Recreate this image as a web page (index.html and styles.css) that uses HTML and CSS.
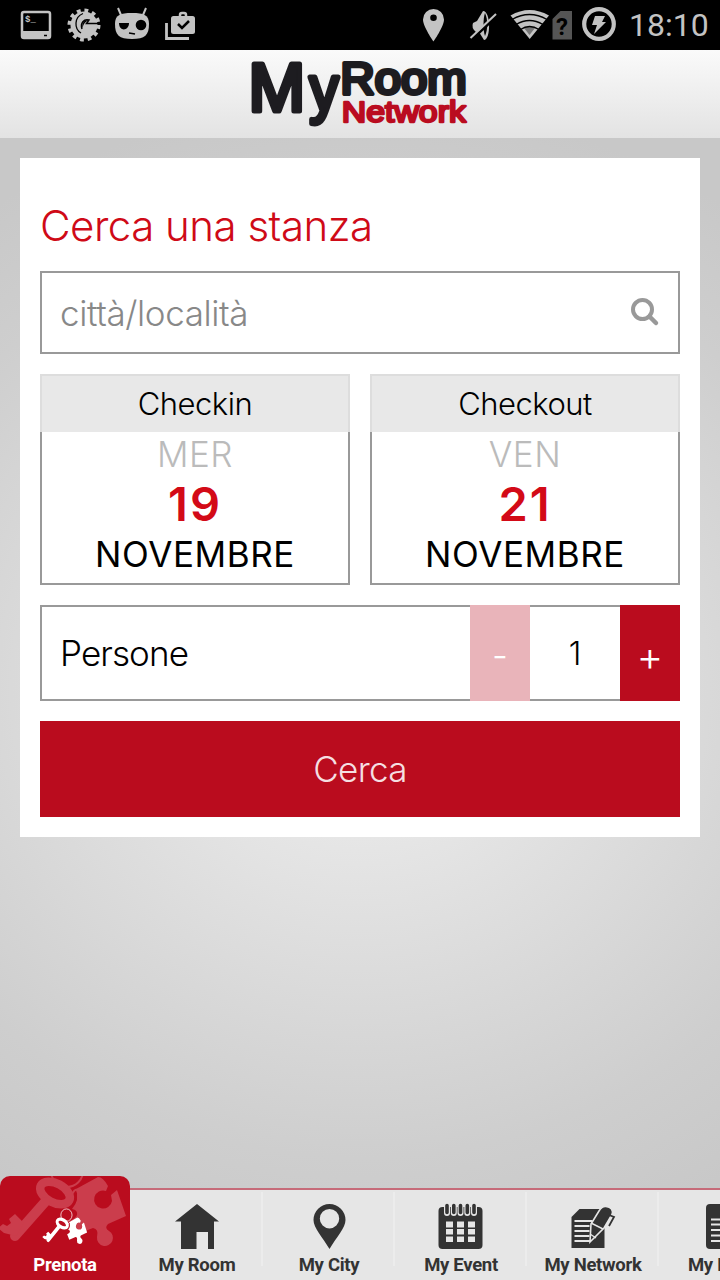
FILE: index.html
```html
<!DOCTYPE html>
<html lang="it">

<head>
    <meta charset="utf-8">
    <title>MyRoom Network</title>
    <link rel="stylesheet" href="styles.css">
</head>

<body>
    <div class="status-bar">
        <svg class="status-icon" viewBox="12 0 48 50">
            <rect x="22" y="12" width="28" height="26" rx="2" fill="none" stroke="#c3c3c3" stroke-width="2.500"/>
            <path d="M22 31h28v7H22z" fill="#c3c3c3"/>
            <path d="M44 35.500h3" stroke="#000" stroke-width="1.500"/>
            <text class="prompt" x="25" y="22">$_</text>
        </svg>
        <svg class="status-icon" viewBox="60 0 48 50">
            <circle cx="84" cy="25" r="13.500" fill="#c3c3c3"/>
            <circle cx="84" cy="25" r="14.500" fill="none" stroke="#c3c3c3" stroke-width="4" stroke-dasharray="3.800 3.792"/>
            <path d="M81 33c-7-4-7-16 2-19.500" fill="none" stroke="#000" stroke-width="1.300"/>
            <path d="M82 29c-2-6 2-10.500 7-9l-2.500 3.500H100" fill="none" stroke="#000" stroke-width="1.500"/>
            <path d="M82.500 28c-1-5 2-8.500 6-7.500-3 1-5 3-6 7.500z" fill="#000"/>
        </svg>
        <svg class="status-icon" viewBox="108 0 48 50">
            <path d="M118 8l3 7M146 8l-3 7" stroke="#c3c3c3" stroke-width="2"/>
            <path d="M115 24c0-9 5-11 17-11s17 2 17 11c0 11-4 15-17 15s-17-4-17-15z" fill="#c3c3c3"/>
            <path d="M119 23h10c0 8-10 9-10 0z" fill="#000"/>
            <circle cx="141" cy="25" r="5.300" fill="#000"/>
            <path d="M129 33l6 1" stroke="#000" stroke-width="1.300"/>
        </svg>
        <svg class="status-icon" viewBox="156 0 48 50">
            <path d="M166.500 23v15.500H189" fill="none" stroke="#c3c3c3" stroke-width="2.800"/>
            <rect x="171" y="16" width="24" height="18" rx="2.500" fill="#c3c3c3"/>
            <path d="M180 17v-2q0-2 2-2h2q2 0 2 2v2" fill="none" stroke="#c3c3c3" stroke-width="2.500"/>
            <path d="M178 24l4 4 7-7" fill="none" stroke="#000" stroke-width="2.500"/>
        </svg>
        <div class="status-right">
            <svg class="status-icon" viewBox="410 0 48 50">
                <path fill-rule="evenodd" d="M433.500 9a10.500 10.500 0 0 0-10.500 10.500c0 7 10.500 22 10.500 22s10.500-15 10.500-22A10.500 10.500 0 0 0 433.500 9zm0 5.500a3.300 3.300 0 1 1 0 6.600 3.300 3.300 0 0 1 0-6.600z" fill="#c3c3c3"/>
            </svg>
            <svg class="status-icon" viewBox="458 0 48 50">
                <path d="M473 23l4-2 6-10c8 0 8 29 1 29l-5-8h-3q-5-4-3-9z" fill="#c3c3c3"/>
                <path d="M485 13c3 7 3 16 0 23-2-5-2-18 0-23z" fill="#000"/>
                <path d="M472 39l26-24" stroke="#000" stroke-width="3"/>
                <path d="M470.500 38l25.500-24" stroke="#c3c3c3" stroke-width="2"/>
            </svg>
            <svg class="wifi" viewBox="506 0 46 50">
                <path d="M510.500 15.500q19-11 38.500 0L529.700 39z" fill="#c3c3c3"/>
                <path d="M524 28q5.500-3 11 0l-5.500 7z" fill="#777"/>
                <path d="M512 19.500q17.500-10 35 0M516 24.500q13.500-8 27 0M520.500 29.500q9-6 18.500 0" fill="none" stroke="#000" stroke-width="1.300"/>
            </svg>
            <svg class="sim" viewBox="552 0 21 50">
                <path d="M552.500 19l8-8h11.500v28.500h-19.500z" fill="#555"/>
                <text class="sim-mark" x="562" y="35">?</text>
            </svg>
            <svg class="battery" viewBox="573 0 52 50">
                <circle cx="599" cy="24" r="14.800" fill="none" stroke="#c3c3c3" stroke-width="4.200"/>
                <path d="M595 16h10l-3 6h4l-12 12 3-9h-5z" fill="#c3c3c3"/>
            </svg>
            <span class="clock">18:10</span>
        </div>
    </div>

    <header class="header">
        <svg class="logo" viewBox="0 0 260 88">
            <text class="logo-my" x="18.400" y="60.500">M</text>
            <text class="logo-my logo-y" x="79.500" y="61.300" textLength="29" lengthAdjust="spacingAndGlyphs">y</text>
            <text class="logo-room" x="110.600" y="44" textLength="126" lengthAdjust="spacingAndGlyphs">Room</text>
            <text class="logo-network" x="111.800" y="71.700" textLength="124" lengthAdjust="spacingAndGlyphs">Network</text>
        </svg>
    </header>

    <main class="content">
        <form class="card">
            <h1 class="title">Cerca una stanza</h1>
            <div class="search">
                <input class="search-input" type="text" placeholder="città/località">
                <svg class="search-icon" viewBox="0 0 30 30">
                    <circle cx="12.500" cy="11.500" r="9.500" fill="none" stroke="#999" stroke-width="4"/>
                    <path d="M19.500 18.500l6.500 6.500" stroke="#999" stroke-width="4.500" stroke-linecap="round"/>
                </svg>
            </div>
            <div class="dates">
                <div class="date">
                    <div class="date-head">Checkin</div>
                    <div class="date-body">
                        <div class="weekday">MER</div>
                        <div class="day">19</div>
                        <div class="month">NOVEMBRE</div>
                    </div>
                </div>
                <div class="date">
                    <div class="date-head">Checkout</div>
                    <div class="date-body">
                        <div class="weekday">VEN</div>
                        <div class="day">21</div>
                        <div class="month">NOVEMBRE</div>
                    </div>
                </div>
            </div>
            <div class="people">
                <span class="people-label">Persone</span>
                <button class="step minus" type="button">-</button>
                <span class="people-count">1</span>
                <button class="step plus" type="button">+</button>
            </div>
            <button class="submit" type="submit">Cerca</button>
        </form>
    </main>

    <nav class="tabs">
        <a class="tab active">
            <svg class="tab-art" viewBox="0 0 130 104">
                <defs>
                    <g id="keys">
                        <circle cx="67" cy="-5" r="16" fill="none" stroke="currentColor" stroke-width="2"/>
                        <ellipse cx="55" cy="17" rx="16" ry="9.500" transform="rotate(28 55 17)" fill="none" stroke="currentColor" stroke-width="8.500"/>
                        <path d="M45 26L15 60" stroke="currentColor" stroke-width="10" stroke-linecap="round"/>
                        <path d="M24 47l-9-9-6 5 2 4-4 3-4-2-5 4 6 5 12 3z" fill="currentColor"/>
                        <path d="M72 18q5-8 6-1v5" fill="none" stroke="currentColor" stroke-width="2"/>
                        <path d="M76 13L98 1q5 0 10 9l-2 5a9 9 0 1 0 6 10l-1-6 6-5 9 26-18 8q-4 4 1 7a8 8 0 1 1-12 6q2-8-4-9L75 59l-6-14q6-2 8-6 1-5-5-6 8-9 4-20z" fill="currentColor"/>
                    </g>
                </defs>
                <use class="keys-back" href="#keys"/>
                <use class="keys-front" href="#keys" transform="translate(43 41) scale(.35 .385)"/>
            </svg>
            <span class="tab-label">Prenota</span>
        </a>
        <a class="tab">
            <svg class="tab-icon" viewBox="0 0 48 48">
                <path d="M24 1L46 18.500h-5V46H35V29H23.500v17H8V18.500H2z" fill="#333"/>
            </svg>
            <span class="tab-label">My Room</span>
        </a>
        <a class="tab">
            <svg class="tab-icon" viewBox="0 0 48 48">
                <path fill-rule="evenodd" d="M24.500 1A16 16 0 0 0 8.500 17c0 8 9 17 16 29 7-12 16-21 16-29a16 16 0 0 0-16-16zm0 5a9.700 9.700 0 1 1 0 19.400 9.700 9.700 0 0 1 0-19.400z" fill="#333"/>
            </svg>
            <span class="tab-label">My City</span>
        </a>
        <a class="tab">
            <svg class="tab-icon" viewBox="0 0 48 48">
                <rect x="1.500" y="4" width="44" height="42" rx="4" fill="#333"/>
                <path d="M10 3v7M23.500 3v7M37 3v7M16.800 3v7M30.300 3v7" stroke="#e6e6e6" stroke-width="6" stroke-linecap="round"/>
                <path d="M10 2.500v7M23.500 2.500v7M37 2.500v7M16.800 2.500v7M30.300 2.500v7" stroke="#333" stroke-width="3.600" stroke-linecap="round"/>
                <path d="M9 18.500h7v6H9zm11 0h7v6h-7zm11 0h7v6h-7zM9 26h7v5.500H9zm11 0h7v5.500h-7zm11 0h7v5.500h-7zM9 33.500h7V39H9zm11 0h7V39h-7zm11 0h7V39h-7z" fill="#e6e6e6"/>
            </svg>
            <span class="tab-label">My Event</span>
        </a>
        <a class="tab">
            <svg class="tab-icon" viewBox="0 0 48 48">
                <path d="M2.500 14l8-8h25v39h-33z" fill="#333"/>
                <path d="M5.500 18h18M5.500 23h15M5.500 28h15M5.500 33h15M5.500 38h16" stroke="#e6e6e6" stroke-width="2"/>
                <path d="M21 39l1-18L30 8q3-5 7-4.500 8 1 6 8L35 25z" fill="#333" stroke="#e6e6e6" stroke-width="1.600"/>
                <path d="M22 20l12 6M21 31l6 4" stroke="#e6e6e6" stroke-width="1.400"/>
                <path d="M40 12l5 2-5 9" fill="none" stroke="#333" stroke-width="1.800"/>
            </svg>
            <span class="tab-label">My Network</span>
        </a>
        <a class="tab">
            <svg class="tab-icon" viewBox="0 0 48 48">
                <rect x="5" y="1" width="38" height="45" rx="4" fill="#333"/>
                <path d="M10 16.500h28M10 21.500h28M10 27h28M10 32.500h28M10 38h28" stroke="#e6e6e6" stroke-width="2.200"/>
            </svg>
            <span class="tab-label">My News</span>
        </a>
    </nav>
</body>

</html>
```
FILE: styles.css
```css
* {
    box-sizing: border-box;
}

body {
    margin: 0;
    width: 720px;
    height: 1280px;
    display: flex;
    flex-direction: column;
    overflow: hidden;
    font-family: Inter, "Liberation Sans", sans-serif;
    font-weight: 300;
    color: #000;
    background: radial-gradient(ellipse 700px 640px at 360px 690px, #eee 0%, #e6e6e6 23%, #d6d6d6 56%, #cecece 73%, #c8c8c8 92%);
}

svg {
    display: block;
    flex-shrink: 0;
}

.status-bar {
    height: 50px;
    flex-shrink: 0;
    padding-left: 12px;
    display: flex;
    background: #000;
}

.status-icon {
    width: 48px;
    height: 50px;
}

.prompt {
    font: bold 9px "Liberation Mono", monospace;
    fill: #c3c3c3;
}

.status-right {
    display: flex;
    margin-left: auto;
    width: 310px;
}

.wifi {
    width: 46px;
    height: 50px;
}

.sim {
    width: 21px;
    height: 50px;
}

.sim-mark {
    font: bold 24px Roboto, sans-serif;
    text-anchor: middle;
}

.battery {
    width: 52px;
    height: 50px;
}

.clock {
    padding-left: 4px;
    font: 32px/51px Roboto, sans-serif;
    color: #c3c3c3;
}

.header {
    height: 88px;
    flex-shrink: 0;
    display: flex;
    padding-left: 230px;
    background: linear-gradient(#fafafa, #e3e3e3);
}

.logo {
    width: 260px;
    height: 88px;
}

.logo text {
    font-family: "Liberation Sans", Arial, sans-serif;
    font-weight: 400;
    stroke-linejoin: round;
}

.logo-my {
    font-size: 68px;
    fill: #1d1c20;
    stroke: #1d1c20;
    stroke-width: 5px;
}

.logo-y {
    font-size: 64px;
}

.logo-room {
    font-size: 44px;
    fill: #1d1c20;
    stroke: #1d1c20;
    stroke-width: 4px;
}

.logo-network {
    font-size: 30px;
    fill: #ba0c20;
    stroke: #ba0c20;
    stroke-width: 2.4px;
}

.content {
    flex: 1;
    padding: 20px;
}

.card {
    height: 679px;
    padding: 43px 20px 20px;
    background: #fff;
}

.title {
    margin: 0 0 20px;
    font-size: 42px;
    font-weight: 300;
    line-height: 50px;
    letter-spacing: -0.5px;
    color: #cf0a17;
}

.search {
    display: flex;
    align-items: center;
    height: 83px;
    margin-bottom: 20px;
    padding: 0 18px;
    border: 2px solid #999;
}

.search-input {
    flex: 1;
    min-width: 0;
    padding: 0;
    border: none;
    outline: none;
    background: none;
    font: 300 35px Inter, sans-serif;
    letter-spacing: -0.4px;
}

.search-input::placeholder {
    color: #888;
}

.search-icon {
    width: 30px;
    height: 30px;
}

.dates {
    display: grid;
    grid-template-columns: 1fr 1fr;
    gap: 20px;
    margin-bottom: 20px;
    text-align: center;
}

.date-head {
    height: 58px;
    border: 2px solid #ddd;
    border-bottom: none;
    background: #e8e8e8;
    font-size: 31px;
    line-height: 56px;
    letter-spacing: -0.5px;
}

.date-body {
    height: 153px;
    border: 2px solid #999;
    border-top: none;
}

.weekday {
    font-size: 35px;
    line-height: 44px;
    letter-spacing: 0.5px;
    color: #bbb;
}

.day {
    font-size: 47px;
    font-weight: 600;
    line-height: 56px;
    letter-spacing: 2px;
    color: #d30a17;
}

.month {
    font-size: 35px;
    font-weight: 400;
    line-height: 44px;
    letter-spacing: 0.6px;
}

.people {
    display: flex;
    height: 96px;
    margin-bottom: 20px;
}

.people-label,
.people-count {
    border: 2px solid #999;
    line-height: 92px;
}

.people-label {
    flex: 1;
    padding-left: 18px;
    border-right: none;
    font-size: 35px;
    letter-spacing: -0.9px;
}

.people-count {
    width: 90px;
    border-left: none;
    border-right: none;
    text-align: center;
    font-size: 32px;
    line-height: 94px;
}

.step {
    width: 60px;
    padding: 8px 0 0;
    border: none;
    background: #ba0c1e;
    color: #fff;
    font: 300 35px Inter, sans-serif;
}

.minus {
    padding-top: 4px;
    background: #e9b4ba;
}

.plus {
    padding-top: 6px;
    font-size: 41px;
}

.submit {
    display: block;
    width: 100%;
    height: 96px;
    border: none;
    background: #ba0c1e;
    color: #f5dfe1;
    font: 300 35px Inter, sans-serif;
    letter-spacing: -0.7px;
}

.tabs {
    display: flex;
    align-items: flex-end;
    height: 104px;
    flex-shrink: 0;
    overflow: hidden;
    background: linear-gradient(transparent 12px, #c66b79 12px, #c66b79 14px, #e6e6e6 14px);
    font-family: Roboto, sans-serif;
    font-weight: bold;
    font-size: 18.5px;
    letter-spacing: -0.3px;
    color: #333;
}

.tab {
    flex: 0 0 132px;
    height: 90px;
    padding-top: 13px;
    display: flex;
    flex-direction: column;
    align-items: center;
    background: linear-gradient(#ececec, #ececec) right 2px / 2px 74px no-repeat;
}

.tab-icon {
    width: 48px;
    height: 48px;
}

.tab-label {
    line-height: 28px;
    white-space: nowrap;
}

.active {
    flex-basis: 130px;
    height: 104px;
    margin-right: 1px;
    padding-top: 75px;
    position: relative;
    border-radius: 10px 10px 0 0;
    background: #ba0c1e;
    color: #fff;
    overflow: hidden;
}

.tab-art {
    position: absolute;
    left: 0;
    top: 0;
    width: 130px;
    height: 104px;
}

.keys-back {
    color: #cb3d4c;
}

.keys-front {
    color: #fff;
}
```
